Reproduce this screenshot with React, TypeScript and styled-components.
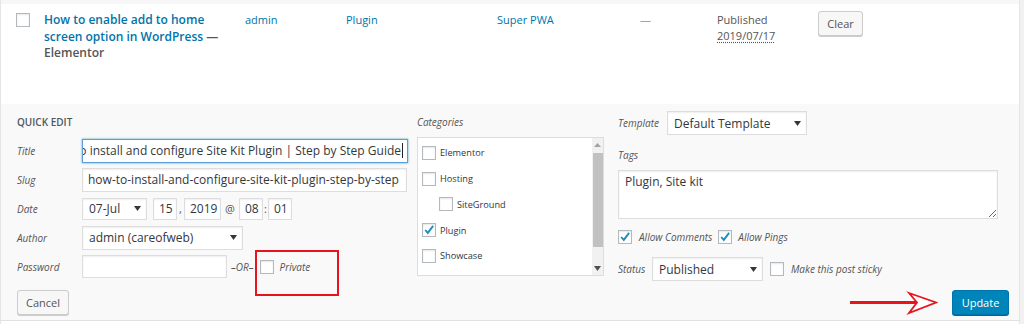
import React from "react";
import styled, { createGlobalStyle } from "styled-components";

const GlobalStyle = createGlobalStyle`
  html, body {
    margin: 0;
    padding: 0;
    background: #f1f1f1;
  }
  body {
    width: 1024px;
    height: 324px;
    overflow: hidden;
    font-family: "Open Sans", "Noto Sans", "Liberation Sans", sans-serif;
    color: #555;
  }
  * {
    box-sizing: border-box;
  }
`;

const Table = styled.div`
  width: 1020px;
  height: 324px;
  display: flex;
  flex-direction: column;
  border-left: 1px solid #e5e5e5;
  border-right: 1px solid #e5e5e5;
  background: #fff;
`;

const PrevRowEdge = styled.div`
  height: 4px;
  background: #f7f7f7;
`;

const PostRow = styled.div`
  display: grid;
  grid-template-columns: 43px 201px 101px 151px 143px 77px 101px 1fr;
  height: 100px;
  padding-top: 8px;
  background: #fff;
  font-size: 11px;
  line-height: 16px;
`;

const CheckCell = styled.div`
  padding: 1px 0 0 15px;
`;

const TitleCell = styled.div`
  padding-right: 10px;
  font-size: 12px;
  line-height: 16.5px;
  font-weight: 600;
  color: #555;
`;

const RowLink = styled.span`
  color: #0073aa;
`;

const Cell = styled.div<{ $link?: boolean; $muted?: boolean }>`
  color: ${({ $link, $muted }) => ($link ? "#0073aa" : $muted ? "#a0a5aa" : "#555")};
`;

const DateAbbr = styled.span`
  text-decoration: underline dotted;
  text-underline-offset: 2px;
`;

const Button = styled.div<{ $primary?: boolean; $w: number }>`
  display: flex;
  align-items: center;
  justify-content: center;
  width: ${({ $w }) => $w}px;
  height: 25px;
  border-radius: 3px;
  font-size: 11px;
  border: 1px solid ${({ $primary }) => ($primary ? "#0073aa" : "#ccc")};
  background: ${({ $primary }) => ($primary ? "#0085ba" : "#f7f7f7")};
  color: ${({ $primary }) => ($primary ? "#fff" : "#555")};
  box-shadow: 0 1px 0 ${({ $primary }) => ($primary ? "#006799" : "#ccc")};
`;

const ClearButton = styled(Button)`
  margin-top: -1px;
`;

const QuickEdit = styled.div`
  height: 217px;
  padding: 7px 10px 5px 16px;
  background: #f9f9f9;
  border-bottom: 1px solid #e1e1e1;
`;

const Columns = styled.div`
  display: flex;
  height: 170px;
`;

const LeftCol = styled.div`
  width: 391px;
`;

const MidCol = styled.div`
  width: 187px;
  margin-left: 9px;
`;

const RightCol = styled.div`
  flex: 1;
  margin-left: 14px;
  display: flex;
  flex-direction: column;
`;

const Legend = styled.div`
  height: 22px;
  line-height: 22px;
  margin-bottom: 3px;
  font-size: 10px;
  font-weight: 600;
  color: #50575e;
`;

const FieldRow = styled.div`
  position: relative;
  display: flex;
  align-items: center;
  height: 29px;
`;

const Label = styled.span<{ $w?: number }>`
  ${({ $w }) => ($w ? `width: ${$w}px;` : "")}
  flex-shrink: 0;
  font-size: 10px;
  font-style: italic;
  color: #555;
`;

const TextBox = styled.div<{ $w: number; $h?: number; $focus?: boolean }>`
  display: flex;
  align-items: center;
  justify-content: flex-start;
  width: ${({ $w }) => $w}px;
  height: ${({ $h }) => $h ?? 24}px;
  padding: 0 5px;
  overflow: hidden;
  white-space: nowrap;
  background: #fff;
  font-size: 12px;
  color: #32373c;
  border: 1px solid ${({ $focus }) => ($focus ? "#5b9dd9" : "#ddd")};
  box-shadow: ${({ $focus }) =>
    $focus ? "0 0 2px rgba(30,140,190,.8)" : "inset 0 1px 2px rgba(0,0,0,.07)"};
  & > * {
    flex-shrink: 0;
  }
`;

const ScrolledBox = styled(TextBox)`
  justify-content: flex-end;
  padding-right: 4px;
`;

const Caret = styled.span`
  width: 1px;
  height: 15px;
  margin-left: 1px;
  background: #222;
`;

const SelectBox = styled(TextBox)`
  justify-content: space-between;
  padding: 0 5px 0 6px;
`;

const Sep = styled.span<{ $w: number }>`
  width: ${({ $w }) => $w}px;
  text-align: center;
  font-size: 11px;
  color: #555;
`;

const Gap = styled.span<{ $w: number }>`
  width: ${({ $w }) => $w}px;
  flex-shrink: 0;
`;

const CheckBox = styled.span`
  display: inline-flex;
  align-items: center;
  justify-content: center;
  flex-shrink: 0;
  width: 14px;
  height: 14px;
  background: #fff;
  border: 1px solid #b4b9be;
  box-shadow: inset 0 1px 2px rgba(0,0,0,.1);
  overflow: visible;
`;

const RedFrame = styled.div`
  position: absolute;
  left: 238px;
  top: -2px;
  width: 84px;
  height: 46px;
  border: 2px solid #e8141b;
  pointer-events: none;
`;

const CatLabel = styled(Label)`
  display: block;
  height: 22px;
  line-height: 22px;
  margin-bottom: 4px;
`;

const CatBox = styled.div`
  display: flex;
  height: 139px;
  background: #fff;
  border: 1px solid #ddd;
`;

const CatList = styled.div`
  flex: 1;
  overflow: hidden;
  padding: 2px 0 0 4px;
`;

const CatItem = styled.div<{ $indent?: boolean }>`
  display: flex;
  align-items: center;
  height: 25.75px;
  padding-left: ${({ $indent }) => ($indent ? 17 : 0)}px;
  font-size: 9.2px;
  color: #32373c;
  gap: 4px;
`;

const ScrollTrack = styled.div`
  width: 11px;
  display: flex;
  flex-direction: column;
  align-items: center;
  background: #f1f1f1;
`;

const ScrollArrow = styled.div`
  height: 14px;
  display: flex;
  align-items: center;
  justify-content: center;
`;

const ScrollThumb = styled.div`
  width: 10px;
  height: 94px;
  margin-top: 1px;
  background: #c1c1c1;
`;

const Spacer = styled.div`
  flex: 1;
`;

const InlineRow = styled.div<{ $mt?: number; $h: number }>`
  display: flex;
  align-items: center;
  height: ${({ $h }) => $h}px;
  margin-top: ${({ $mt }) => $mt ?? 0}px;
`;

const TagsArea = styled.textarea`
  width: 380px;
  height: 49px;
  margin: 5px 0 0;
  padding: 3px 6px;
  resize: both;
  background: #fff;
  border: 1px solid #ddd;
  box-shadow: inset 0 1px 2px rgba(0,0,0,.07);
  font-family: inherit;
  font-size: 12px;
  line-height: 16px;
  color: #32373c;
  outline: none;
`;

const SubmitRow = styled.div`
  display: flex;
  align-items: center;
  height: 25px;
  margin-top: 9px;
`;

const NextRow = styled.div`
  flex: 1;
  background: #fff;
`;

const Arrow = styled.svg`
  margin-right: 14px;
  flex-shrink: 0;
`;

const DownTri = ({ color = "#32373c" }: { color?: string }) => (
  <svg width="7" height="5" viewBox="0 0 7 5">
    <path d="M0 0 H7 L3.5 5 Z" fill={color} />
  </svg>
);

const UpTri = ({ color = "#a3a3a3" }: { color?: string }) => (
  <svg width="7" height="4" viewBox="0 0 7 4">
    <path d="M0 4 H7 L3.5 0 Z" fill={color} />
  </svg>
);

const Check = ({ checked }: { checked?: boolean }) => (
  <CheckBox>
    {checked && (
      <svg width="14" height="14" viewBox="0 0 14 14" style={{ marginTop: -1 }}>
        <path d="M2.6 7 L5.6 10.4 L11.8 2.2" fill="none" stroke="#1e8cbe" strokeWidth="2.2" />
      </svg>
    )}
  </CheckBox>
);

const categories = [
  { name: "Elementor" },
  { name: "Hosting" },
  { name: "SiteGround", indent: true },
  { name: "Plugin", checked: true },
  { name: "Showcase" },
  { name: "Tutorials" },
];

const App = () => {
  return (
    <>
      <GlobalStyle />
      <Table>
        <PrevRowEdge />

        <PostRow>
          <CheckCell>
            <Check />
          </CheckCell>
          <TitleCell>
            <RowLink>How to enable add to home screen option in WordPress</RowLink> — Elementor
          </TitleCell>
          <Cell $link>admin</Cell>
          <Cell $link>Plugin</Cell>
          <Cell $link>Super PWA</Cell>
          <Cell $muted>—</Cell>
          <Cell>
            Published
            <br />
            <DateAbbr>2019/07/17</DateAbbr>
          </Cell>
          <div>
            <ClearButton $w={45}>Clear</ClearButton>
          </div>
        </PostRow>

        <QuickEdit>
          <Columns>
            <LeftCol>
              <Legend>QUICK EDIT</Legend>
              <FieldRow>
                <Label $w={65}>Title</Label>
                <ScrolledBox $w={326} $focus>
                  <span>How to install and configure Site Kit Plugin | Step by Step Guide</span>
                  <Caret />
                </ScrolledBox>
              </FieldRow>
              <FieldRow>
                <Label $w={65}>Slug</Label>
                <TextBox $w={325}>
                  <span>how-to-install-and-configure-site-kit-plugin-step-by-step</span>
                </TextBox>
              </FieldRow>
              <FieldRow>
                <Label $w={65}>Date</Label>
                <SelectBox $w={65} $h={22}>
                  <span>07-Jul</span>
                  <DownTri />
                </SelectBox>
                <Gap $w={6} />
                <TextBox $w={24} $h={22}>15</TextBox>
                <Sep $w={7}>,</Sep>
                <TextBox $w={37} $h={22}>2019</TextBox>
                <Sep $w={18}>@</Sep>
                <TextBox $w={24} $h={22}>08</TextBox>
                <Sep $w={5}>:</Sep>
                <TextBox $w={24} $h={22}>01</TextBox>
              </FieldRow>
              <FieldRow>
                <Label $w={65}>Author</Label>
                <SelectBox $w={161}>
                  <span>admin (careofweb)</span>
                  <DownTri />
                </SelectBox>
              </FieldRow>
              <FieldRow>
                <Label $w={65}>Password</Label>
                <TextBox $w={145} $h={23} />
                <Gap $w={4} />
                <Label>–OR–</Label>
                <Gap $w={6} />
                <Check />
                <Gap $w={6} />
                <Label>Private</Label>
                <RedFrame />
              </FieldRow>
            </LeftCol>

            <MidCol>
              <CatLabel>Categories</CatLabel>
              <CatBox>
                <CatList>
                  {categories.map((c) => (
                    <CatItem key={c.name} $indent={c.indent}>
                      <Check checked={c.checked} />
                      <span>{c.name}</span>
                    </CatItem>
                  ))}
                </CatList>
                <ScrollTrack>
                  <ScrollArrow>
                    <UpTri />
                  </ScrollArrow>
                  <ScrollThumb />
                  <Spacer />
                  <ScrollArrow>
                    <DownTri color="#505050" />
                  </ScrollArrow>
                </ScrollTrack>
              </CatBox>
            </MidCol>

            <RightCol>
              <InlineRow $h={24}>
                <Label $w={49}>Template</Label>
                <SelectBox $w={140}>
                  <span>Default Template</span>
                  <DownTri />
                </SelectBox>
              </InlineRow>
              <InlineRow $h={20} $mt={10}>
                <Label>Tags</Label>
              </InlineRow>
              <TagsArea readOnly value="Plugin, Site kit" />
              <InlineRow $h={20} $mt={8}>
                <Check checked />
                <Gap $w={7} />
                <Label>Allow Comments</Label>
                <Gap $w={6} />
                <Check checked />
                <Gap $w={6} />
                <Label>Allow Pings</Label>
              </InlineRow>
              <InlineRow $h={24} $mt={10}>
                <Label $w={34}>Status</Label>
                <SelectBox $w={111}>
                  <span>Published</span>
                  <DownTri />
                </SelectBox>
                <Gap $w={7} />
                <Check />
                <Gap $w={7} />
                <Label>Make this post sticky</Label>
              </InlineRow>
            </RightCol>
          </Columns>

          <SubmitRow>
            <Button $w={52}>Cancel</Button>
            <Spacer />
            <Arrow width="90" height="25" viewBox="0 0 90 25">
              <path d="M2 12.5 H68" stroke="#e8141b" strokeWidth="3" />
              <path d="M61 3 L88 12.5 L61 23 L69 12.5 Z" fill="#fff" stroke="#e8141b" strokeWidth="1.8" strokeLinejoin="miter" />
            </Arrow>
            <Button $primary $w={57}>Update</Button>
          </SubmitRow>
        </QuickEdit>

        <NextRow />
      </Table>
    </>
  );
};

export default App;
